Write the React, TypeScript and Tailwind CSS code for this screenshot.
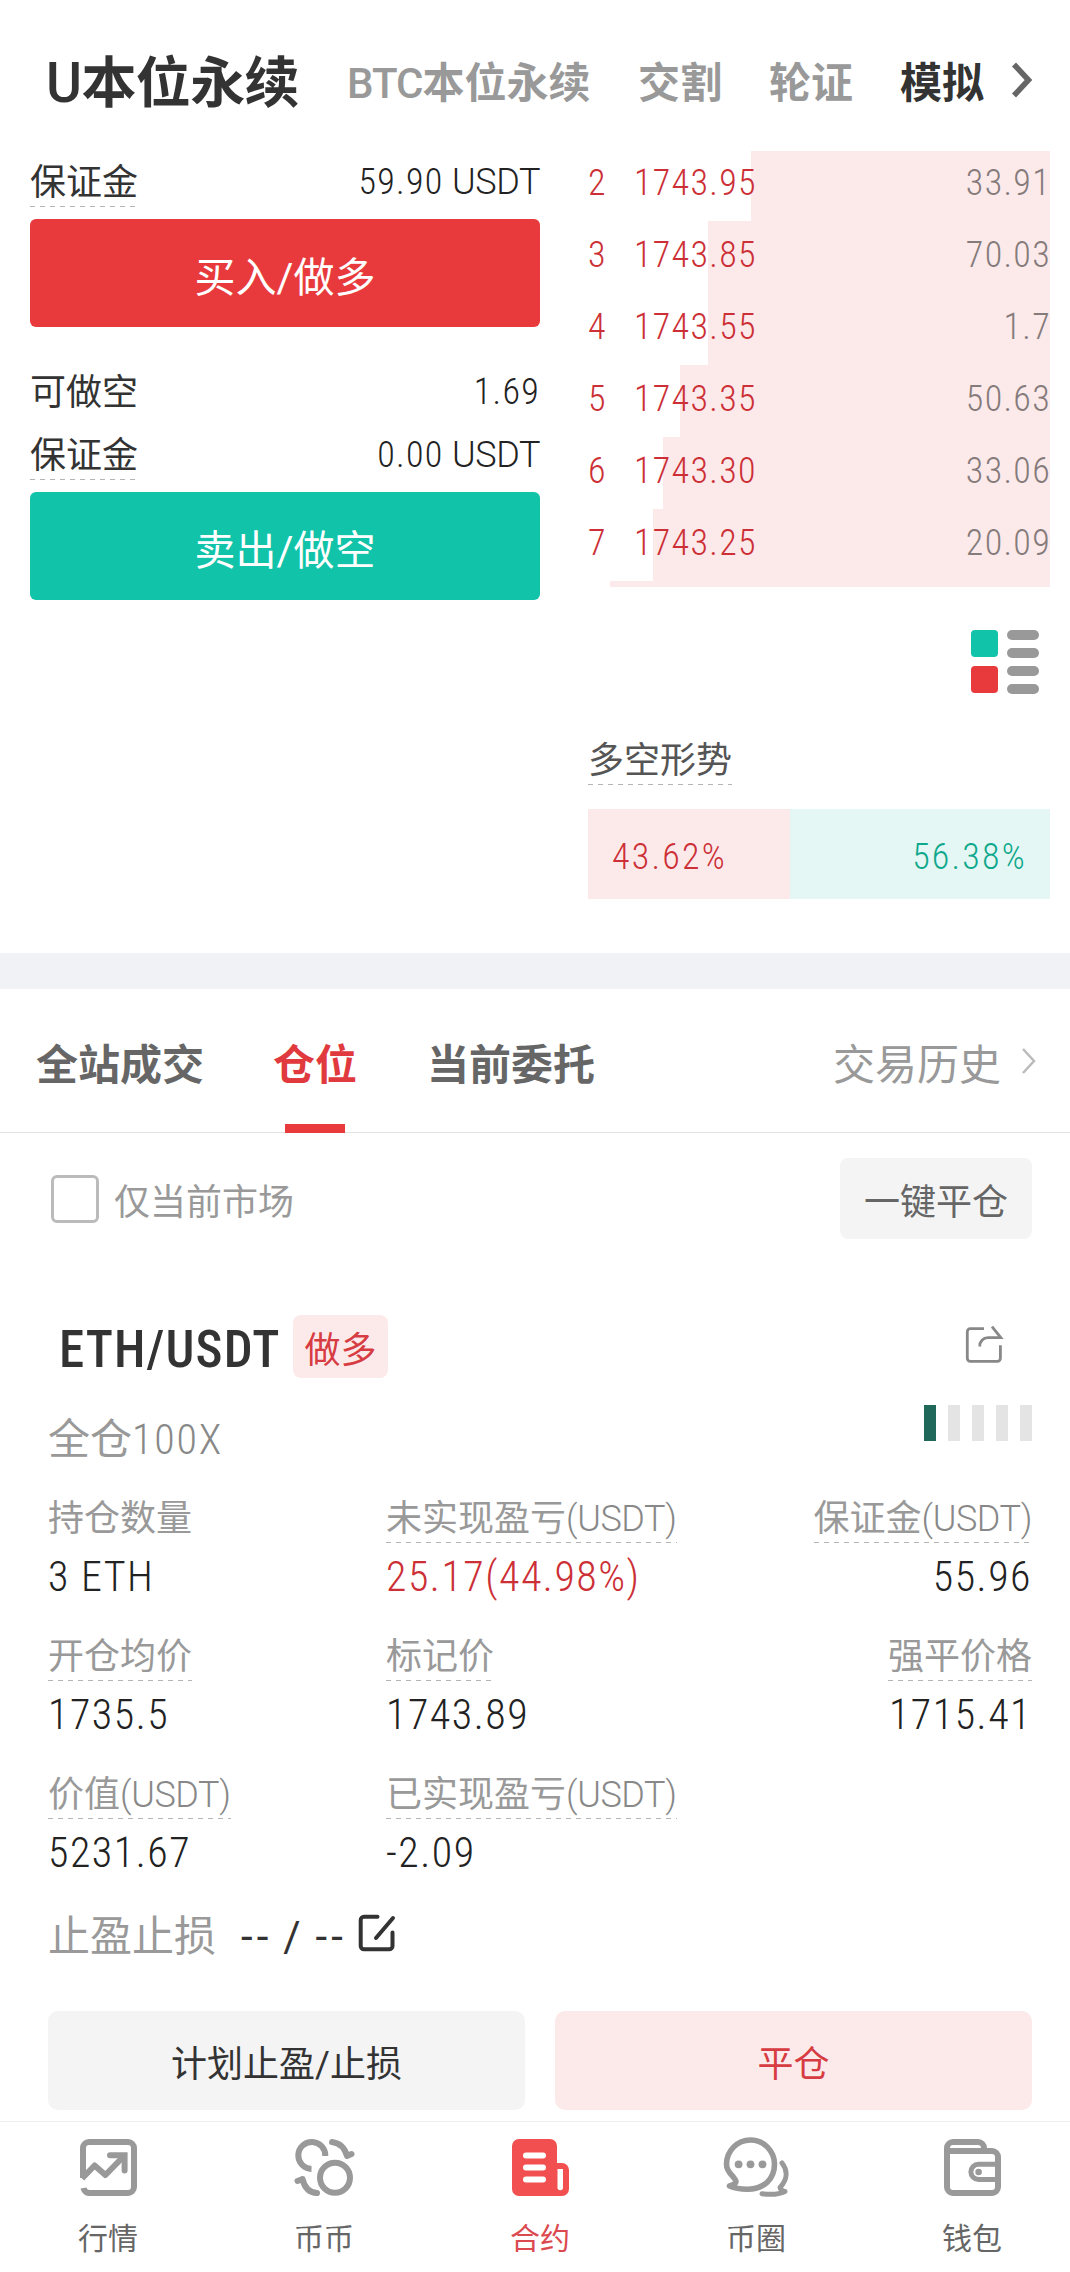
import type { ReactNode } from "react";

interface Ask {
    level: number;
    price: string;
    amount: string;
    depth: number;
}

interface StatProps {
    label: string;
    unit?: string;
    value: string;
    plain?: boolean;
    right?: boolean;
    valueClass?: string;
}

interface MarginRowProps {
    label: string;
    value: string;
    unit?: string;
    dashed?: boolean;
}

const asks: Ask[] = [
    { level: 2, price: "1743.95", amount: "33.91", depth: 299 },
    { level: 3, price: "1743.85", amount: "70.03", depth: 342 },
    { level: 4, price: "1743.55", amount: "1.7", depth: 342 },
    { level: 5, price: "1743.35", amount: "50.63", depth: 370 },
    { level: 6, price: "1743.30", amount: "33.06", depth: 387 },
    { level: 7, price: "1743.25", amount: "20.09", depth: 397 },
];

const Dashes = () => (
    <div className="h-px w-full bg-[repeating-linear-gradient(90deg,#b4b4b4_0_5px,transparent_5px_10px)]" />
);

const Stat = ({ label, unit, value, plain, right, valueClass = "text-[#222]" }: StatProps) => (
    <div className={right ? "flex h-[138px] flex-col items-end" : "flex h-[138px] flex-col items-start"}>
        <div className="text-[#999]">
            <div className="h-[46px] whitespace-nowrap text-4xl leading-[46px]">
                {label}
                {unit && <span className="font-light tracking-[-0.4px] text-[#888]">({unit})</span>}
            </div>
            {!plain && <Dashes />}
        </div>
        <div className={`mt-auto h-[94px] -mb-[4px] text-[42px] leading-[66px] font-light tracking-[1.5px] font-stretch-75% ${valueClass}`}>{value}</div>
    </div>
);

const MarginRow = ({ label, value, unit, dashed }: MarginRowProps) => (
    <div className="flex justify-between text-4xl leading-[48px] text-[#333]">
        <div>
            <div className="h-[48px] leading-[50px]">{label}</div>
            {dashed && <Dashes />}
        </div>
        <div className="font-light text-[#222]">
            <span className="tracking-[1.3px] font-stretch-75%">{value}</span>
            {unit && <span className="tracking-[-0.4px]"> {unit}</span>}
        </div>
    </div>
);

const Header = () => (
    <header className="flex h-[151px] items-center pt-[16px] pl-[46px] text-[42px] font-bold text-[#999]">
        <h1 className="w-[301px] text-[55px] tracking-[-0.6px] text-[#333]"><span className="font-medium">U</span>本位永续</h1>
        <span className="w-[291px]"><span className="font-medium tracking-[-1px]">BTC</span>本位永续</span>
        <span className="w-[131px]">交割</span>
        <span className="w-[131px]">轮证</span>
        <span className="w-[111px] text-[#333]">模拟</span>
        <svg className="-mt-[8px] h-[40px] w-[24px]" viewBox="0 0 24 40" fill="none" stroke="#666" strokeWidth="5.5">
            <path d="M3 4.5L17.5 20L3 35.5" />
        </svg>
    </header>
);

const OrderBook = () => (
    <div className="w-[462px]">
        <div className="h-[430px] overflow-hidden">
            <div className="-mt-[2px]">
                {asks.map((ask) => (
                    <div key={ask.level} className="relative flex h-[72px] items-center pb-[5px] text-4xl font-light tracking-[1.3px] font-stretch-75%">
                        <div className="absolute inset-y-0 right-0 bg-[#fceaeb]" style={{ width: ask.depth }} />
                        <span className="relative w-[46px] text-[#cc2f36]">{ask.level}</span>
                        <span className="relative text-[#cc2f36]">{ask.price}</span>
                        <span className="relative -mr-px ml-auto text-[#857b7b]">{ask.amount}</span>
                    </div>
                ))}
            </div>
        </div>
        <div className="ml-auto h-[6px] w-[440px] bg-[#fceaeb]" />

        <svg className="mt-[43px] ml-[383px] h-[64px] w-[68px]" viewBox="0 0 68 64">
            <rect x="0" y="0" width="27" height="27" rx="4" fill="#11c3a8" />
            <rect x="0" y="36" width="27" height="27" rx="4" fill="#e83a3d" />
            <g fill="#999">
                <rect x="36" y="0" width="32" height="10" rx="5" />
                <rect x="36" y="18" width="32" height="10" rx="5" />
                <rect x="36" y="36" width="32" height="10" rx="5" />
                <rect x="36" y="54" width="32" height="10" rx="5" />
            </g>
        </svg>

        <div className="mt-[42px] w-[144px] text-[#555]">
            <div className="h-[48px] text-4xl leading-[50px]">多空形势</div>
            <Dashes />
        </div>
        <div className="mt-[24px] flex h-[90px] text-4xl leading-[96px] font-light tracking-[2.2px] font-stretch-75%">
            <div className="w-[43.62%] bg-[#fceaeb] pl-[24px] text-[#cc2f36]">43.62%</div>
            <div className="flex-1 bg-[#e4f7f4] pr-[23px] text-right text-[#0fa88c]">56.38%</div>
        </div>
    </div>
);

const NavItem = ({ label, active, children }: { label: string; active?: boolean; children: ReactNode }) => (
    <div className="flex w-[216px] shrink-0 flex-col items-center pt-[15px]">
        <svg className="h-[60px] w-[68px]" viewBox="-2 0 68 60" fill="none" stroke="#999" strokeWidth="6">
            {children}
        </svg>
        <span className={active ? "mt-[22px] text-[30px] leading-[40px] text-[#db4a4f]" : "mt-[22px] text-[30px] leading-[40px] text-[#666]"}>{label}</span>
    </div>
);

const BottomNav = () => (
    <nav className="flex h-[151px] overflow-hidden border-t border-[#eee] bg-white">
        <NavItem label="行情">
            <path d="M7 41V11a6 6 0 0 1 6-6H52a6 6 0 0 1 6 6V50a6 6 0 0 1-6 6H13a6 6 0 0 1-5.5-5" />
            <path d="M6 41.5L18.6 28.5L29.4 38L48 19" strokeLinejoin="round" />
            <path d="M34 18.3H48.6V33.5" strokeLinecap="round" />
        </NavItem>
        <NavItem label="币币">
            <circle cx="43" cy="40.7" r="15" />
            <path d="M33.3 19A13.5 13.5 0 1 0 19.5 32" />
            <path d="M40 5C48 6 53 11.5 55 19L59.5 17M25 56C17 55.5 12.5 51 10.5 42L5.5 44" strokeLinecap="round" strokeLinejoin="round" />
        </NavItem>
        <NavItem label="合约" active>
            <path d="M11 2H42a7 7 0 0 1 7 7V26H54a7 7 0 0 1 7 7V52a7 7 0 0 1-7 7H11a7 7 0 0 1-7-7V9a7 7 0 0 1 7-7Z" fill="#f25050" stroke="none" />
            <path d="M18 18.5H35M18 30.5H35M18 42.5H35" stroke="#fff" strokeLinecap="round" />
            <path d="M49.5 32H55V50.5a2.7 2.7 0 0 1-5.5 0Z" fill="#fff" stroke="none" />
        </NavItem>
        <NavItem label="币圈">
            <path d="M5.5 49C9 48 12 46.5 12 44.5C12 43 10 41 8.5 39C5 35.5 2.5 32 2.5 27.3A24 24.3 0 0 1 50.5 27.3C50.5 42 40 52 24 52.2C17 52.3 10 51 5.5 49Z" strokeWidth="5.6" strokeLinejoin="round" />
            <g fill="#999" stroke="none">
                <circle cx="14.6" cy="27.3" r="3.9" />
                <circle cx="26.5" cy="27.3" r="3.9" />
                <circle cx="38.5" cy="27.3" r="3.9" />
            </g>
            <path d="M58 26C63.5 33 64 42 56 50.5C56 52 58.5 54 61 54.5C55 57.5 46 57.8 38 56.8" strokeWidth="5" strokeLinecap="round" strokeLinejoin="round" />
        </NavItem>
        <NavItem label="钱包">
            <path d="M7 13V50a6 6 0 0 0 6 6H52a6 6 0 0 0 6-6V20a6 6 0 0 0-6-6H7M7 14V11a6 6 0 0 1 6-6H38a6 6 0 0 1 6 6V14" />
            <path d="M58 27.3H38.5a7.6 7.6 0 0 0 0 15.2H58" strokeWidth="5" />
            <circle cx="38.6" cy="35" r="3.3" fill="#999" stroke="none" />
        </NavItem>
    </nav>
);

export default function App() {
    return (
        <div className="flex h-[2272px] w-[1070px] flex-col overflow-hidden bg-white font-['Roboto','Noto_Sans_CJK_SC',sans-serif]">
            <Header />

            <section className="flex h-[802px] justify-between pr-[20px] pl-[30px]">
                <div className="w-[510px] pt-[7px]">
                    <MarginRow label="保证金" value="59.90" unit="USDT" dashed />
                    <button className="mt-[12px] block h-[108px] w-full rounded-md bg-[#e83a3d] pt-[10px] text-[41px] leading-[98px] text-white">买入/做多</button>
                    <div className="mt-[41px]">
                        <MarginRow label="可做空" value="1.69" />
                    </div>
                    <div className="mt-[15px]">
                        <MarginRow label="保证金" value="0.00" unit="USDT" dashed />
                    </div>
                    <button className="mt-[12px] block h-[108px] w-full rounded-md bg-[#11c3a8] pt-[10px] text-[41px] leading-[98px] text-white">卖出/做空</button>
                </div>
                <OrderBook />
            </section>

            <div className="h-[36px] shrink-0 bg-[#f1f2f5]" />

            <div className="flex h-[144px] shrink-0 border-b border-[#e2e2e2] pl-[36px] text-[42px] leading-[154px] font-bold text-[#666]">
                <span className="w-[237px]">全站成交</span>
                <div className="relative w-[154px] text-[#e03a3e]">
                    仓位
                    <div className="absolute -bottom-px left-[12px] h-[9px] w-[60px] bg-[#e83a3d]" />
                </div>
                <span>当前委托</span>
                <span className="mr-[20px] ml-auto font-normal text-[#999]">交易历史</span>
                <svg className="mt-[58px] mr-[33px] h-[28px] w-[16px]" viewBox="0 0 16 28" fill="none" stroke="#bbb" strokeWidth="2.5">
                    <path d="M2 2L13 14L2 26" />
                </svg>
            </div>

            <section className="flex grow flex-col pr-[38px] pl-[48px]">
                <div className="mt-[25px] flex h-[81px] items-center text-4xl">
                    <div className="ml-[3px] h-[48px] w-[48px] rounded-md border-3 border-[#bbb]" />
                    <span className="ml-[15px] pt-[8px] text-[#999]">仅当前市场</span>
                    <button className="ml-auto h-[81px] w-[192px] rounded-lg bg-[#f4f4f4] pt-[8px] text-[#666]">一键平仓</button>
                </div>

                <div className="mt-[76px] flex h-[63px] items-center">
                    <h2 className="w-[245px] pl-[11px] pt-[6px] text-[51px] leading-[60px] font-medium tracking-[1.1px] font-stretch-75% text-[#333]">ETH/USDT</h2>
                    <span className="h-[63px] w-[95px] rounded-lg bg-[#fceaeb] text-center text-4xl leading-[73px] text-[#d63c42]">做多</span>
                    <svg className="mr-[25px] mb-[2px] ml-auto h-[45px] w-[45px]" viewBox="0 0 45 45" fill="none" stroke="#888" strokeWidth="2.8">
                        <path d="M22 5.7H8.3a3 3 0 0 0-3 3V35.3a3 3 0 0 0 3 3H35.4a3 3 0 0 0 3-3V22.3" />
                        <path d="M30 3.7L38.8 14.7H26a8.2 8.2 0 0 0-8.2 8.8" />
                    </svg>
                </div>

                <div className="mt-[27px] flex h-[86px] justify-between text-[42px] leading-[70px] text-[#999]">
                    <div>全仓<span className="font-light tracking-[1.8px] font-stretch-75% text-[#888]">100X</span></div>
                    <div className="flex gap-[12px]">
                        <div className="h-[36px] w-[12px] bg-[#20695a]" />
                        <div className="h-[36px] w-[12px] bg-[#e4e4e4]" />
                        <div className="h-[36px] w-[12px] bg-[#e4e4e4]" />
                        <div className="h-[36px] w-[12px] bg-[#e4e4e4]" />
                        <div className="h-[36px] w-[12px] bg-[#e4e4e4]" />
                    </div>
                </div>

                <div className="mt-[5px] grid grid-cols-[338px_1fr_auto]">
                    <Stat label="持仓数量" value="3 ETH" plain />
                    <Stat label="未实现盈亏" unit="USDT" value="25.17(44.98%)" valueClass="text-[#cc2f36]" />
                    <Stat label="保证金" unit="USDT" value="55.96" right />
                    <Stat label="开仓均价" value="1735.5" />
                    <Stat label="标记价" value="1743.89" />
                    <Stat label="强平价格" value="1715.41" right />
                    <Stat label="价值" unit="USDT" value="5231.67" />
                    <Stat label="已实现盈亏" unit="USDT" value="-2.09" />
                </div>

                <div className="-mt-[4px] flex h-[60px] items-center text-[42px] text-[#333]">
                    <span className="w-[193px] text-[#999]">止盈止损</span>
                    <span className="w-[114px] whitespace-nowrap tracking-[4.2px] [word-spacing:-4px]">-- / --</span>
                    <svg className="-mt-[6px] h-[44px] w-[44px]" viewBox="0 0 44 44" fill="none" stroke="#333" strokeWidth="4" strokeLinecap="round">
                        <path d="M22.5 5.7H9a3.3 3.3 0 0 0-3.3 3.3V35a3.3 3.3 0 0 0 3.3 3.3H34.2a3.3 3.3 0 0 0 3.3-3.3V21.5" />
                        <path d="M21 27L38 7" />
                    </svg>
                </div>

                <div className="mt-auto mb-[11px] flex gap-[30px] text-4xl leading-[108px]">
                    <button className="h-[99px] flex-1 rounded-[10px] bg-[#f4f4f4] text-[#333]">计划止盈/止损</button>
                    <button className="h-[99px] flex-1 rounded-[10px] bg-[#fceaeb] text-[#d63c42]">平仓</button>
                </div>
            </section>

            <BottomNav />
        </div>
    );
}
